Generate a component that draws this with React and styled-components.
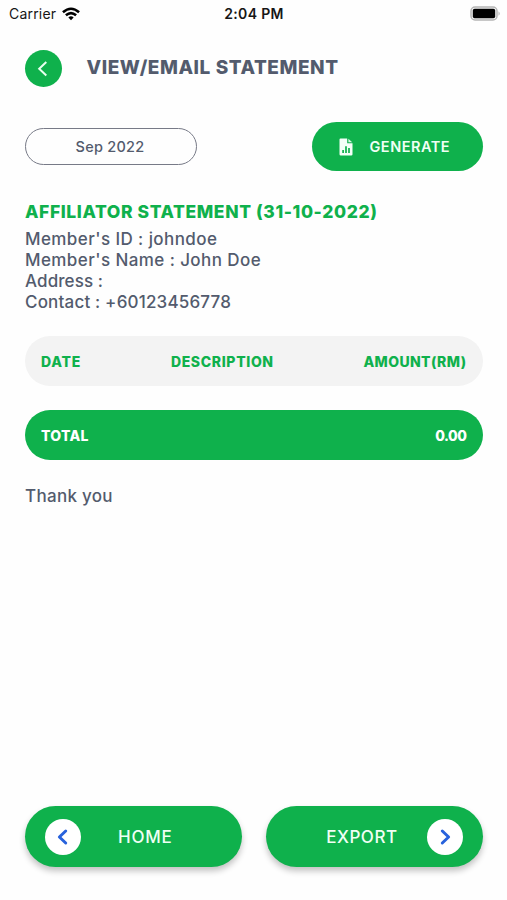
import React from "react";
import styled, { createGlobalStyle } from "styled-components";

const GREEN = "#0fb14c";
const SLATE = "#535b6d";

const GlobalStyle = createGlobalStyle`
  *, *::before, *::after { box-sizing: border-box; }
  body {
    margin: 0;
    background: #fefefe;
    color: ${SLATE};
    font-family: Inter, "Liberation Sans", sans-serif;
  }
  svg { display: block; flex: none; }
`;

const Screen = styled.main`
  width: 507px;
  height: 900px;
  overflow: hidden;
  display: flex;
  flex-direction: column;
`;

const StatusBar = styled.header`
  height: 28px;
  padding: 0 6px 1px 9px;
  display: grid;
  grid-template-columns: 1fr auto 1fr;
  align-items: center;
  color: #161616;
`;

const Carrier = styled.div`
  display: flex;
  align-items: center;
  gap: 6px;
`;

const BatterySlot = styled.div`
  justify-self: end;
`;

const Clock = styled.div`
  display: flex;
  margin-right: 2px;
`;

const Label = styled.span`
  font-size: ${(p) => p.$size}px;
  font-weight: ${(p) => p.$weight || 500};
  letter-spacing: ${(p) => p.$track || 0}px;
  line-height: ${(p) => p.$leading || 20}px;
  white-space: nowrap;
`;

const Content = styled.section`
  flex: 1;
  padding: 22px 24.5px 33px 25px;
  display: flex;
  flex-direction: column;
`;

const TitleBar = styled.div`
  height: 37px;
  padding-bottom: 1px;
  display: flex;
  align-items: center;
  gap: 24.5px;
`;

const BackButton = styled.button`
  width: 37px;
  height: 37px;
  padding: 0;
  border: 0;
  border-radius: 50%;
  background: ${GREEN};
  display: grid;
  place-items: center;
`;

const Controls = styled.div`
  margin-top: 35px;
  height: 49px;
  display: flex;
  align-items: center;
  justify-content: space-between;
`;

const MonthField = styled.button`
  width: 172px;
  height: 37px;
  padding: 0 2px 0 0;
  border: 1.5px solid #777a87;
  border-radius: 19px;
  background: transparent;
  color: ${SLATE};
  font-family: inherit;
`;

const GenerateButton = styled.button`
  width: 171px;
  height: 49px;
  padding: 0 0 0 27px;
  border: 0;
  border-radius: 25px;
  background: ${GREEN};
  color: #effff4;
  font-family: inherit;
  display: flex;
  align-items: center;
  gap: 17px;
`;

const StatementTitle = styled.h2`
  margin: 31px 0 0;
  height: 20px;
  color: ${GREEN};
  display: flex;
`;

const Details = styled.div`
  margin-top: 7.4px;
  display: grid;
  grid-auto-rows: 20.8px;
`;

const TableBar = styled.div`
  height: 50px;
  margin-top: ${(p) => p.$top}px;
  padding: 2px 16px 0;
  border-radius: 25px;
  background: ${(p) => (p.$solid ? GREEN : "#f3f3f3")};
  color: ${(p) => (p.$solid ? "#fff" : GREEN)};
  display: flex;
  align-items: center;
  justify-content: space-between;
`;

const Closing = styled.p`
  margin: 26px 0 0;
  line-height: 20px;
  display: flex;
`;

const Footer = styled.nav`
  margin-top: auto;
  display: grid;
  grid-template-columns: 217px 217px;
  justify-content: space-between;
`;

const FooterButton = styled.button`
  height: 61px;
  padding: 0 20px;
  border: 0;
  border-radius: 31px;
  background: ${GREEN};
  box-shadow: 0 4px 6px rgba(0, 0, 0, 0.24);
  color: #effff4;
  font-family: inherit;
  display: flex;
  align-items: center;
  justify-content: ${(p) => (p.$end ? "flex-end" : "flex-start")};
  gap: ${(p) => p.$gap}px;
`;

const ArrowDisc = styled.span`
  width: 36px;
  height: 36px;
  border-radius: 50%;
  background: #fff;
  display: grid;
  place-items: center;
`;

const WifiIcon = () => (
  <svg width="18" height="14" viewBox="0 0 19 14" fill="none" stroke="#000" strokeWidth="2.7">
    <path d="M1 5.2Q9.5-2.3 18 5.2" />
    <path d="M4.1 8.4Q9.5 3.7 14.9 8.4" />
    <path d="M6.7 10.6Q9.5 8.4 12.3 10.6L9.5 13.6Z" fill="#000" stroke="none" />
  </svg>
);

const BatteryIcon = () => (
  <svg width="31" height="15" viewBox="0 0 31 15">
    <rect x="1" y="1" width="26" height="13" rx="4" fill="#f4f4f4" stroke="#b5b5b5" strokeWidth="1.5" />
    <rect x="2.8" y="2.8" width="22.4" height="9.4" rx="1.8" fill="#000" />
    <path d="M28.5 5.2Q31 7.5 28.5 9.8Z" fill="#b5b5b5" />
  </svg>
);

const BackIcon = () => (
  <svg width="37" height="37" viewBox="0 0 37 37" fill="none" stroke="#e8ffef" strokeWidth="2">
    <path d="M21.3 12L14.2 18.7L21.3 25.4" />
  </svg>
);

const ReportIcon = () => (
  <svg width="14" height="18" viewBox="0 0 14 18">
    <path d="M1.5.5H8.2V5.2H13.5V16.2Q13.5 17.5 12.2 17.5H1.8Q.5 17.5.5 16.2V1.5Q.5.5 1.5.5Z" fill="#f4fff7" />
    <path d="M9.4.8L13.2 4.2H9.4Z" fill="#d8f6e2" />
    <path d="M4.1 12V15M7 8.2V15M10 10V15" stroke={GREEN} strokeWidth="1.7" />
  </svg>
);

const ArrowIcon = ({ right }) => (
  <svg width="36" height="36" viewBox="0 0 36 36" fill="none" stroke="#2862dc" strokeWidth="3" strokeLinecap="round" strokeLinejoin="round">
    <path d={right ? "M15.3 12L21.6 18L15.3 24" : "M20.7 12L14.4 18L20.7 24"} />
  </svg>
);

const details = [
  ["Member's ID : johndoe", 0.42],
  ["Member's Name : John Doe", 0.42],
  ["Address :", 0.1],
  ["Contact : +60123456778", 0.18],
];

export default function App() {
  return (
    <Screen>
      <GlobalStyle />
      <StatusBar>
        <Carrier>
          <Label $size={14} $weight={400} $track={0.2}>Carrier</Label>
          <WifiIcon />
        </Carrier>
        <Clock><Label $size={14} $weight={600} $track={0.35}>2:04 PM</Label></Clock>
        <BatterySlot><BatteryIcon /></BatterySlot>
      </StatusBar>
      <Content>
        <TitleBar>
          <BackButton aria-label="Back"><BackIcon /></BackButton>
          <Label as="h1" $size={19} $weight={800} $track={0.56}>VIEW/EMAIL STATEMENT</Label>
        </TitleBar>
        <Controls>
          <MonthField><Label $size={14.5} $track={0.25}>Sep 2022</Label></MonthField>
          <GenerateButton>
            <ReportIcon />
            <Label $size={14.5} $weight={600} $track={0.5}>GENERATE</Label>
          </GenerateButton>
        </Controls>
        <StatementTitle><Label $size={17.5} $weight={800} $track={0.6}>AFFILIATOR STATEMENT (31-10-2022)</Label></StatementTitle>
        <Details>
          {details.map(([text, track]) => (
            <Label key={text} $size={17} $weight={500} $track={track} $leading={20.8}>{text}</Label>
          ))}
        </Details>
        <TableBar $top={23.4}>
          <Label $size={14} $weight={800} $track={0.8}>DATE</Label>
          <Label $size={14} $weight={800} $track={0.65}>DESCRIPTION</Label>
          <Label $size={14} $weight={800} $track={0.4}>AMOUNT(RM)</Label>
        </TableBar>
        <TableBar $top={24} $solid>
          <Label $size={14} $weight={800} $track={0.3}>TOTAL</Label>
          <Label $size={14} $weight={800} $track={-0.5}>0.00</Label>
        </TableBar>
        <Closing><Label $size={17} $track={0.3}>Thank you</Label></Closing>
        <Footer>
          <FooterButton $gap={37}>
            <ArrowDisc><ArrowIcon /></ArrowDisc>
            <Label $size={17} $track={0.8}>HOME</Label>
          </FooterButton>
          <FooterButton $end $gap={29}>
            <Label $size={17} $track={0.5}>EXPORT</Label>
            <ArrowDisc><ArrowIcon right /></ArrowDisc>
          </FooterButton>
        </Footer>
      </Content>
    </Screen>
  );
}
